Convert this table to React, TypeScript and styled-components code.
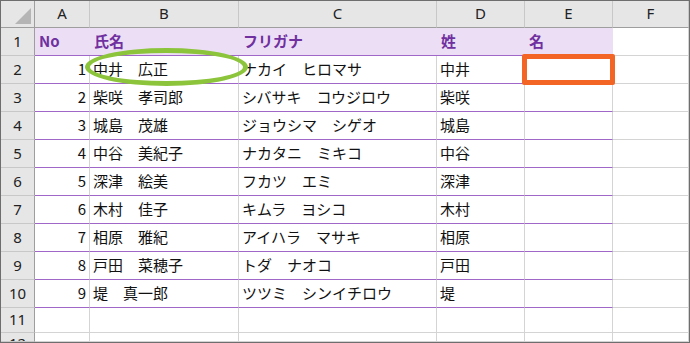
import styled, { createGlobalStyle } from 'styled-components'

const GlobalStyle = createGlobalStyle`
  html, body {
    margin: 0;
    padding: 0;
    background: #ffffff;
  }
`

const people = [
  { no: 1, name: '中井　広正', kana: 'ナカイ　ヒロマサ', sei: '中井' },
  { no: 2, name: '柴咲　孝司郎', kana: 'シバサキ　コウジロウ', sei: '柴咲' },
  { no: 3, name: '城島　茂雄', kana: 'ジョウシマ　シゲオ', sei: '城島' },
  { no: 4, name: '中谷　美紀子', kana: 'ナカタニ　ミキコ', sei: '中谷' },
  { no: 5, name: '深津　絵美', kana: 'フカツ　エミ', sei: '深津' },
  { no: 6, name: '木村　佳子', kana: 'キムラ　ヨシコ', sei: '木村' },
  { no: 7, name: '相原　雅紀', kana: 'アイハラ　マサキ', sei: '相原' },
  { no: 8, name: '戸田　菜穂子', kana: 'トダ　ナオコ', sei: '戸田' },
  { no: 9, name: '堤　真一郎', kana: 'ツツミ　シンイチロウ', sei: '堤' },
]

const columns = ['A', 'B', 'C', 'D', 'E', 'F']

export default function App() {
  return (
    <>
      <GlobalStyle />
      <Sheet>
        <Corner>
          <CornerMark />
        </Corner>
        {columns.map((c) => (
          <ColHead key={c}>{c}</ColHead>
        ))}

        <RowHead $h={28}>1</RowHead>
        <TitleCell>No</TitleCell>
        <TitleCell>氏名</TitleCell>
        <TitleCell>フリガナ</TitleCell>
        <TitleCell>姓</TitleCell>
        <TitleCell>名</TitleCell>
        <Cell $h={28} />

        {people.map((p, i) => (
          <Row key={p.no}>
            <RowHead $h={28}>{i + 2}</RowHead>
            <Cell $h={28} $purple $right>{p.no}</Cell>
            <Cell $h={28} $purple>{p.name}</Cell>
            <Cell $h={28} $purple>{p.kana}</Cell>
            <Cell $h={28} $purple>{p.sei}</Cell>
            <Cell $h={28} $purple />
            <Cell $h={28} />
          </Row>
        ))}

        <RowHead $h={25}>11</RowHead>
        {columns.map((c) => (
          <Cell key={'r11' + c} $h={25} />
        ))}

        <RowHead $h={9} $clip>12</RowHead>
        {columns.map((c) => (
          <Cell key={'r12' + c} $h={9} />
        ))}

        <Ellipse />
        <Target />
      </Sheet>
    </>
  )
}

const Sheet = styled.div`
  position: relative;
  width: 690px;
  height: 343px;
  box-sizing: border-box;
  border: 1px solid #6e6e6e;
  display: grid;
  grid-template-columns: 34px 55px 149px 198px 88px 88px 1fr;
  grid-auto-rows: min-content;
  overflow: hidden;
  background: #ffffff;
  font-family: 'Noto Sans CJK JP', 'Noto Sans', sans-serif;
  font-size: 15px;
  color: #111111;
`

const Row = styled.div`
  display: contents;
`

const HeadBase = styled.div`
  box-sizing: border-box;
  background: #e6e6e6;
  display: flex;
  align-items: center;
  justify-content: center;
  font-family: 'Noto Sans', 'Liberation Sans', sans-serif;
  font-size: 15px;
  color: #222222;
  line-height: 1;
`

const Corner = styled(HeadBase)`
  position: relative;
  height: 27px;
  border-right: 1px solid #9e9e9e;
  border-bottom: 1px solid #9e9e9e;
`

const CornerMark = styled.div`
  position: absolute;
  right: 3px;
  bottom: 3px;
  width: 0;
  height: 0;
  border-left: 16px solid transparent;
  border-bottom: 16px solid #b5b5b5;
`

const ColHead = styled(HeadBase)`
  height: 27px;
  border-right: 1px solid #c8c8c8;
  border-bottom: 1px solid #9e9e9e;
  padding-bottom: 1px;
`

const RowHead = styled(HeadBase)<{ $h: number; $clip?: boolean }>`
  height: ${(p) => p.$h}px;
  border-right: 1px solid #9e9e9e;
  border-bottom: 1px solid #c8c8c8;
  align-items: ${(p) => (p.$clip ? 'flex-start' : 'center')};
  padding-top: ${(p) => (p.$clip ? '3px' : '0')};
  padding-bottom: ${(p) => (p.$clip ? '0' : '1px')};
  overflow: hidden;
`

const Cell = styled.div<{ $h: number; $purple?: boolean; $right?: boolean }>`
  box-sizing: border-box;
  height: ${(p) => p.$h}px;
  border-right: 1px solid #d4d4d4;
  border-bottom: 1px solid ${(p) => (p.$purple ? '#a066c8' : '#d4d4d4')};
  display: flex;
  align-items: center;
  justify-content: ${(p) => (p.$right ? 'flex-end' : 'flex-start')};
  padding: 0 3px 3px 3px;
  line-height: 1;
  white-space: nowrap;
  overflow: hidden;
`

const TitleCell = styled.div`
  box-sizing: border-box;
  height: 28px;
  background: #ecdff5;
  border-bottom: 1px solid #a066c8;
  display: flex;
  align-items: center;
  padding: 0 3px 3px 4px;
  line-height: 1;
  font-weight: 700;
  color: #7030a0;
  white-space: nowrap;
`

const Ellipse = styled.div`
  position: absolute;
  left: 84px;
  top: 47px;
  width: 163px;
  height: 38px;
  box-sizing: border-box;
  border: 5px solid #8cc43c;
  border-radius: 50%;
  pointer-events: none;
`

const Target = styled.div`
  position: absolute;
  left: 521px;
  top: 53px;
  width: 93px;
  height: 31px;
  box-sizing: border-box;
  border: 5px solid #f26524;
  border-radius: 2px;
  pointer-events: none;
`
